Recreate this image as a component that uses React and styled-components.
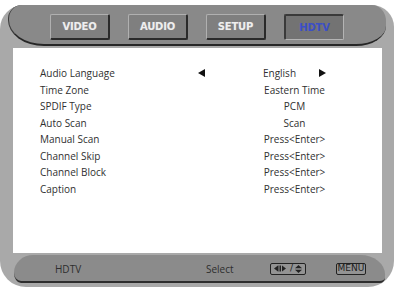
import React from "react";
import styled, { createGlobalStyle } from "styled-components";

const GlobalStyle = createGlobalStyle`
  html, body {
    margin: 0;
    padding: 0;
    background: #ffffff;
  }
  body {
    font-family: "Open Sans", "Noto Sans", sans-serif;
  }
`;

const tabs = [
  { name: "VIDEO" },
  { name: "AUDIO" },
  { name: "SETUP" },
  { name: "HDTV", active: true },
];

const rows = [
  { label: "Audio Language", value: "English", arrows: true },
  { label: "Time Zone", value: "Eastern Time" },
  { label: "SPDIF Type", value: "PCM" },
  { label: "Auto Scan", value: "Scan" },
  { label: "Manual Scan", value: "Press<Enter>" },
  { label: "Channel Skip", value: "Press<Enter>" },
  { label: "Channel Block", value: "Press<Enter>" },
  { label: "Caption", value: "Press<Enter>" },
];

const App = () => {
  return (
    <>
      <GlobalStyle />
      <Frame>
        <TopBar>
          {tabs.map((t) => (
            <Tab key={t.name} $active={t.active}>
              {t.name}
            </Tab>
          ))}
        </TopBar>
        <Panel>
          {rows.map((r) => (
            <Row key={r.label}>
              <Label>{r.label}</Label>
              <ArrowCell>{r.arrows && <Arrow $dir="left" />}</ArrowCell>
              <Value>
                <span>{r.value}</span>
                {r.arrows && <Arrow $dir="right" />}
              </Value>
            </Row>
          ))}
        </Panel>
        <BottomBar>
          <HintText $w={151}>HDTV</HintText>
          <HintText $w={64}>Select</HintText>
          <KeyBox $w={36}>
            <svg width="14" height="7" viewBox="0 0 14 7">
              <path d="M0 3.5 L4 0.5 L4 6.5 Z" fill="#222" />
              <path d="M5 0.5 L5 6.5 M6.5 0.5 L6.5 6.5" stroke="#222" strokeWidth="1" />
              <path d="M8 0.5 L12 3.5 L8 6.5 Z" fill="#222" />
            </svg>
            <Slash>/</Slash>
            <svg width="7" height="8" viewBox="0 0 7 8">
              <path d="M3.5 0 L7 3.2 L0 3.2 Z" fill="#222" />
              <path d="M3.5 8 L7 4.8 L0 4.8 Z" fill="#222" />
            </svg>
          </KeyBox>
          <Spacer $w={30} />
          <KeyBox $w={30}>MENU</KeyBox>
        </BottomBar>
      </Frame>
    </>
  );
};

export default App;

const Frame = styled.div`
  margin-top: 5px;
  width: 394px;
  height: 282px;
  background: #a9a9a9;
  border-radius: 24px 22px 26px 26px;
  display: flex;
  flex-direction: column;
  box-sizing: border-box;
`;

const TopBar = styled.div`
  height: 41px;
  margin: 0 8px 0 8px;
  box-sizing: border-box;
  background: #898989;
  border-bottom: 2px solid #262626;
  border-left: 1px solid #3a3a3a;
  border-radius: 14px 14px 30px 36px / 14px 16px 20px 26px;
  display: flex;
  align-items: flex-start;
  gap: 18px;
  padding: 9px 0 0 41px;
`;

const Tab = styled.div`
  width: 60px;
  height: 26px;
  box-sizing: border-box;
  display: flex;
  align-items: center;
  justify-content: center;
  font-family: "DejaVu Sans", "Verdana", sans-serif;
  font-weight: bold;
  font-size: 10px;
  letter-spacing: -0.2px;
  color: ${(p) => (p.$active ? "#3c4fc6" : "#eeeeee")};
  text-shadow: ${(p) => (p.$active ? "none" : "0 0 1px #9a9a9a")};
  background: ${(p) => (p.$active ? "#737373" : "#7f7f7f")};
  border-style: solid;
  border-width: ${(p) => (p.$active ? "2px 1px 1px 2px" : "1px 2px 2px 1px")};
  border-color: ${(p) =>
    p.$active
      ? "#3a3a3a #b4b4b4 #b4b4b4 #3a3a3a"
      : "#b0b0b0 #2a2a2a #2a2a2a #b0b0b0"};
  border-radius: 2px;
`;

const Panel = styled.div`
  margin: 2px 12px 0 13px;
  height: 205px;
  background: #ffffff;
  box-sizing: border-box;
  padding: 17px 0 0 27px;
`;

const Row = styled.div`
  display: grid;
  grid-template-columns: 158px 12px 169px;
  align-items: center;
  height: 16.5px;
  font-size: 10px;
  color: #303030;
`;

const Label = styled.span`
  white-space: nowrap;
`;

const ArrowCell = styled.span`
  display: flex;
  align-items: center;
`;

const Value = styled.span`
  display: flex;
  align-items: center;
  justify-content: center;
  gap: 23px;
  white-space: nowrap;
`;

const Arrow = styled.span`
  display: inline-block;
  width: 0;
  height: 0;
  border-top: 4px solid transparent;
  border-bottom: 4px solid transparent;
  ${(p) =>
    p.$dir === "left"
      ? "border-right: 7px solid #111;"
      : "border-left: 7px solid #111;"}
`;

const BottomBar = styled.div`
  margin: 2px 9px 0 14px;
  height: 28px;
  box-sizing: border-box;
  background: #8b8b8b;
  border-bottom: 2px solid #2e2e2e;
  border-radius: 22px 28px 6px 8px / 20px 22px 6px 12px;
  display: flex;
  align-items: center;
  padding: 1px 0 0 41px;
`;

const HintText = styled.span`
  width: ${(p) => p.$w}px;
  font-size: 10px;
  color: #2e2e2e;
`;

const Spacer = styled.span`
  width: ${(p) => p.$w}px;
`;

const KeyBox = styled.span`
  width: ${(p) => p.$w}px;
  height: 12px;
  box-sizing: border-box;
  border: 1px solid #222;
  border-radius: 2px;
  display: flex;
  align-items: center;
  justify-content: center;
  gap: 1px;
  font-family: "DejaVu Sans", sans-serif;
  font-size: 9px;
  line-height: 1;
  color: #1e1e1e;
  background: #939393;
`;

const Slash = styled.span`
  font-size: 9px;
  margin: 0 1px;
`;
